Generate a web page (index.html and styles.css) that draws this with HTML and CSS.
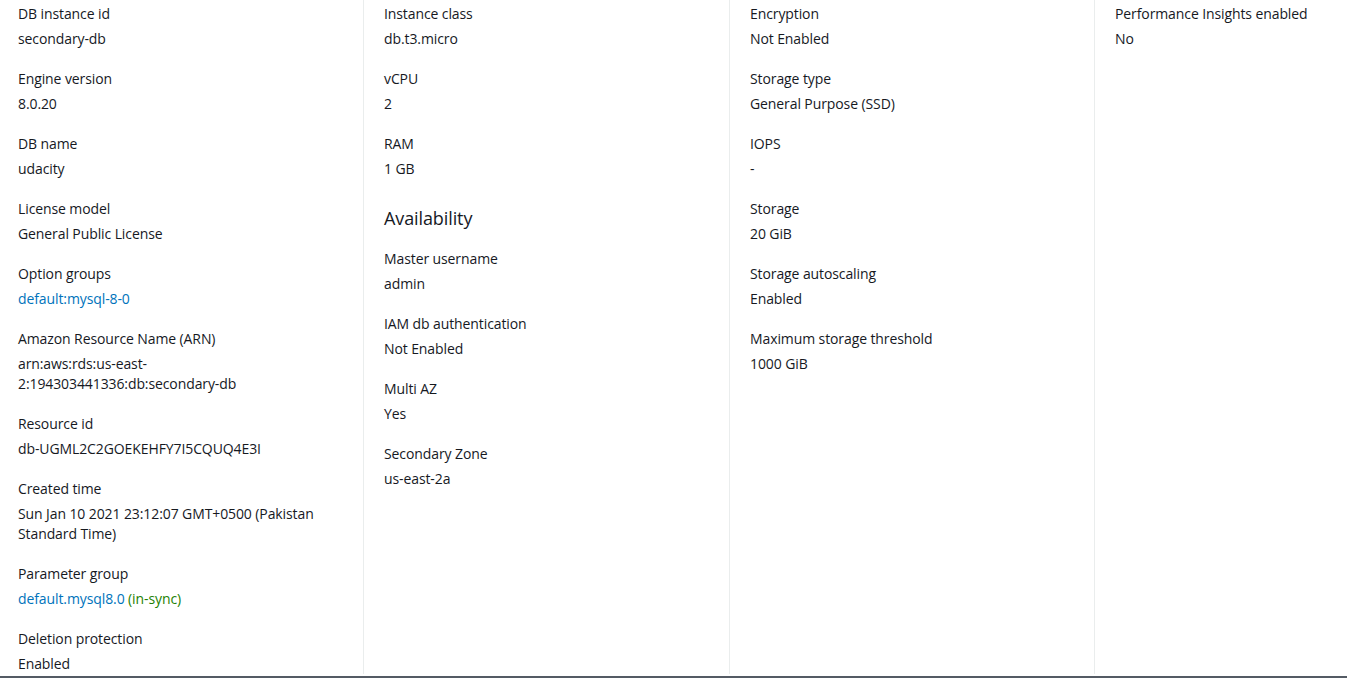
FILE: index.html
```html
<!DOCTYPE html>
<html>
<head>
<meta charset="utf-8">
<link rel="stylesheet" href="styles.css">
</head>
<body>
<div class="page">
  <div class="cols">
    <div class="col first">
      <div class="kv"><div class="k">DB instance id</div><div class="v">secondary-db</div></div>
      <div class="kv"><div class="k">Engine version</div><div class="v">8.0.20</div></div>
      <div class="kv"><div class="k">DB name</div><div class="v">udacity</div></div>
      <div class="kv"><div class="k">License model</div><div class="v">General Public License</div></div>
      <div class="kv"><div class="k">Option groups</div><div class="v"><a class="link">default:mysql-8-0</a></div></div>
      <div class="kv"><div class="k">Amazon Resource Name (ARN)</div><div class="v">arn:aws:rds:us-east-2:194303441336:db:secondary-db</div></div>
      <div class="kv"><div class="k">Resource id</div><div class="v">db-UGML2C2GOEKEHFY7I5CQUQ4E3I</div></div>
      <div class="kv"><div class="k">Created time</div><div class="v">Sun Jan 10 2021 23:12:07 GMT+0500 (Pakistan Standard Time)</div></div>
      <div class="kv"><div class="k">Parameter group</div><div class="v"><a class="link">default.mysql8.0</a> <span class="ok">(in-sync)</span></div></div>
      <div class="kv"><div class="k">Deletion protection</div><div class="v">Enabled</div></div>
    </div>
    <div class="col">
      <div class="kv"><div class="k">Instance class</div><div class="v">db.t3.micro</div></div>
      <div class="kv"><div class="k">vCPU</div><div class="v">2</div></div>
      <div class="kv"><div class="k">RAM</div><div class="v">1 GB</div></div>
      <h2 class="heading">Availability</h2>
      <div class="kv"><div class="k">Master username</div><div class="v">admin</div></div>
      <div class="kv"><div class="k">IAM db authentication</div><div class="v">Not Enabled</div></div>
      <div class="kv"><div class="k">Multi AZ</div><div class="v">Yes</div></div>
      <div class="kv"><div class="k">Secondary Zone</div><div class="v">us-east-2a</div></div>
    </div>
    <div class="col">
      <div class="kv"><div class="k">Encryption</div><div class="v">Not Enabled</div></div>
      <div class="kv"><div class="k">Storage type</div><div class="v">General Purpose (SSD)</div></div>
      <div class="kv"><div class="k">IOPS</div><div class="v">-</div></div>
      <div class="kv"><div class="k">Storage</div><div class="v">20 GiB</div></div>
      <div class="kv"><div class="k">Storage autoscaling</div><div class="v">Enabled</div></div>
      <div class="kv"><div class="k">Maximum storage threshold</div><div class="v">1000 GiB</div></div>
    </div>
    <div class="col last">
      <div class="kv"><div class="k">Performance Insights enabled</div><div class="v">No</div></div>
    </div>
  </div>
</div>
</body>
</html>
```
FILE: styles.css
```css
html, body {
  margin: 0;
  padding: 0;
  background: #ffffff;
}
body {
  font-family: "Open Sans", "Noto Sans", Arial, sans-serif;
  font-size: 14px;
  letter-spacing: -0.1px;
  color: #16191f;
  overflow: hidden;
}
.page {
  width: 1347px;
  height: 678px;
  display: flex;
  flex-direction: column;
  border-bottom: 2px solid #545b64;
  box-sizing: border-box;
}
.cols {
  display: grid;
  grid-template-columns: 363px 366px 365px 1fr;
  height: 674px;
  overflow: hidden;
}
.col {
  padding: 4px 20px 0 20px;
  border-left: 1px solid #eaeded;
  box-sizing: border-box;
}
.col.first {
  border-left: none;
  padding-left: 18px;
}
.kv {
  margin-bottom: 20px;
}
.k, .v {
  line-height: 20px;
}
.k {
  margin-bottom: 5px;
}
.link {
  color: #0073bb;
  text-decoration: none;
}
.ok {
  color: #1d8102;
}
.heading {
  font-size: 18px;
  font-weight: 400;
  line-height: 24px;
  margin: 27px 0 19px 0;
  color: #16191f;
}
```
